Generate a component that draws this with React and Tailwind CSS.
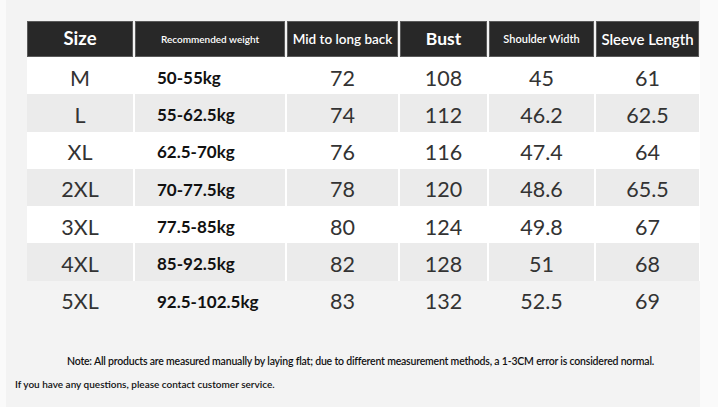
import React from 'react'

const cols = 'grid grid-cols-[106px_150px_111px_87px_105px_103px] gap-x-[2px]'

const rows = [
  ['M', '50-55kg', '72', '108', '45', '61'],
  ['L', '55-62.5kg', '74', '112', '46.2', '62.5'],
  ['XL', '62.5-70kg', '76', '116', '47.4', '64'],
  ['2XL', '70-77.5kg', '78', '120', '48.6', '65.5'],
  ['3XL', '77.5-85kg', '80', '124', '49.8', '67'],
  ['4XL', '85-92.5kg', '82', '128', '51', '68'],
  ['5XL', '92.5-102.5kg', '83', '132', '52.5', '69'],
]

function HeadCell({ children, className }) {
  return (
    <div className={'flex items-center justify-center bg-[#282828] border border-[#5a5a5a] text-white ' + className}>
      {children}
    </div>
  )
}

function Row({ data, index }) {
  const last = index === rows.length - 1
  const bg = last ? 'bg-transparent' : index % 2 === 0 ? 'bg-white' : 'bg-[#ebebeb]'
  const gapBg = last ? 'bg-transparent' : 'bg-white'
  return (
    <div className={cols + ' h-[37.3px] ' + gapBg}>
      {data.map((v, i) => (
        <div key={i}
          className={'flex items-center pt-[4px] ' + bg + ' ' +
            (i === 1 ? 'justify-start pl-[22px] font-bold text-[17px] text-[#111]' : 'justify-center text-[21.5px] text-[#333]')}>
          {v}
        </div>
      ))}
    </div>
  )
}

export default function App() {
  return (
    <div className="w-[718px] h-[407px] bg-[#fafafa] overflow-hidden" style={{ fontFamily: 'Lato, "Open Sans", sans-serif' }}>
      <div className="ml-[6px] w-[694px] h-full bg-[#f3f3f3] pt-[21px]">
        <div className="ml-[21px]">
          <div className={cols + ' h-[36px]'}>
            <HeadCell className="text-[18.5px] font-bold">Size</HeadCell>
            <HeadCell className="text-[10px] font-semibold">Recommended weight</HeadCell>
            <HeadCell className="text-[13.5px] font-semibold">Mid to long back</HeadCell>
            <HeadCell className="text-[17.5px] font-bold">Bust</HeadCell>
            <HeadCell className="text-[11px] font-semibold">Shoulder Width</HeadCell>
            <HeadCell className="text-[15px] font-semibold">Sleeve Length</HeadCell>
          </div>
          {rows.map((r, i) => <Row key={r[0]} data={r} index={i} />)}
        </div>
        <p className="mt-[37px] ml-[61px] text-[10.5px] font-semibold text-[#111] tracking-[-0.2px] leading-[12px]">
          Note: All products are measured manually by laying flat; due to different measurement methods, a 1-3CM error is considered normal.
        </p>
        <p className="mt-[11px] ml-[9px] text-[10px] font-semibold text-[#111] leading-[12px]">
          If you have any questions, please contact customer service.
        </p>
      </div>
    </div>
  )
}
